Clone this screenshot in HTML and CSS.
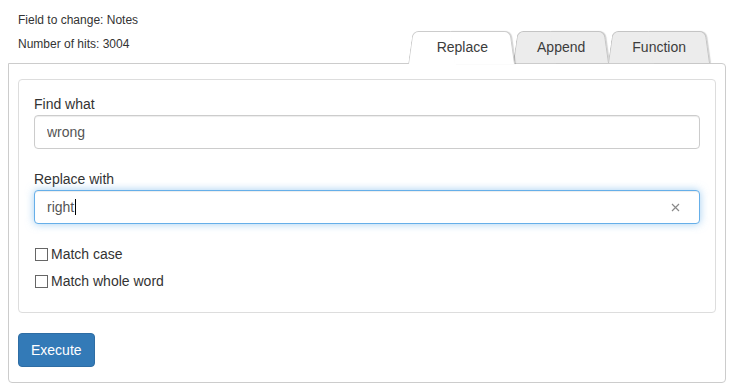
FILE: index.html
```html
<!DOCTYPE html>
<html>
<head>
<meta charset="utf-8">
<title>Find and replace</title>
<link rel="stylesheet" href="styles.css">
</head>
<body>
	<!-- Header: info + tabs -->
	<div class="header">
		<div class="info">
			<div>Field to change: Notes</div>
			<div>Number of hits: 3004</div>
		</div>
		<ul class="tabs">
			<li class="tab active">Replace</li>
			<li class="tab">Append</li>
			<li class="tab">Function</li>
		</ul>
	</div>
	<!-- Tab content -->
	<div class="panel">
		<div class="well">
			<div class="group">
				<label class="caption">Find what</label>
				<input class="field" type="text" value="wrong">
			</div>
			<div class="group">
				<label class="caption">Replace with</label>
				<div class="field focus">
					<span>right</span><span class="caret"></span>
					<svg class="clear" width="9" height="9" viewBox="0 0 9 9"><path d="M1 1L8 8M8 1L1 8" stroke="#8a8a8a" stroke-width="1.2" fill="none"/></svg>
				</div>
			</div>
			<label class="check"><input type="checkbox">Match case</label>
			<label class="check"><input type="checkbox">Match whole word</label>
		</div>
		<button class="btn">Execute</button>
	</div>
</body>
</html>
```
FILE: styles.css
```css
body {
	margin: 8px 7px 0 8px;
	font-family: "Liberation Sans", Arial, sans-serif;
	font-size: 14px;
	color: #333;
}
.header {
	display: flex;
	justify-content: space-between;
	height: 55px;
}
.info {
	padding-left: 10px;
	font-size: 12px;
	line-height: 24px;
}

/* tabs */
.tabs {
	list-style: none;
	margin: 0 16px -1px 0;
	padding: 0;
	display: flex;
	align-self: flex-end;
}
.tab {
	position: relative;
	z-index: 1;
	height: 33px;
	line-height: 33px;
	padding: 0 24px;
	margin-left: -1px;
	color: #3c3c3c;
}
.tab::before,
.tab::after {
	content: '';
	position: absolute;
	top: 0;
	bottom: 1px;
	width: 55%;
	z-index: -1;
	background: #ececec;
	border: 1px solid #c4c4c4;
	border-bottom: none;
}
.tab::before {
	left: 0;
	border-right: none;
	border-radius: 6px 0 0 0;
	transform-origin: bottom left;
	transform: skewX(-8deg);
}
.tab::after {
	right: 0;
	border-left: none;
	border-radius: 0 6px 0 0;
	transform-origin: bottom right;
	transform: skewX(8deg);
	box-shadow: 1px 0 1px rgba(0, 0, 0, 0.18);
}
.tab.active {
	z-index: 2;
	padding: 0 26px 0 29px;
}
.tab.active::before,
.tab.active::after {
	background: #fff;
	bottom: 0;
	border-color: #ccc;
}

/* content */
.panel {
	border: 1px solid #ccc;
	border-radius: 0 4px 4px 4px;
	padding: 15px 9px;
}
.well {
	border: 1px solid #ddd;
	border-radius: 4px;
	padding: 14px 15px 21px;
	margin-bottom: 20px;
}
.group { margin-bottom: 20px; }
.caption {
	display: block;
	line-height: 20px;
	margin-bottom: 1px;
}
.field {
	display: block;
	width: 100%;
	box-sizing: border-box;
	height: 34px;
	padding: 6px 12px;
	border: 1px solid #ccc;
	border-radius: 4px;
	box-shadow: inset 0 1px 1px rgba(0, 0, 0, 0.075);
	font-family: inherit;
	font-size: 14px;
	line-height: 20px;
	color: #555;
	background: #fff;
}
.focus {
	position: relative;
	display: flex;
	align-items: center;
	border-color: #66afe9;
	box-shadow: inset 0 1px 1px rgba(0, 0, 0, 0.075), 0 0 8px rgba(102, 175, 233, 0.6);
}
.caret {
	width: 1px;
	height: 16px;
	margin-left: 1px;
	background: #000;
}
.clear {
	position: absolute;
	right: 19px;
	top: 12px;
}
.check {
	display: flex;
	align-items: center;
	line-height: 20px;
	margin-bottom: 7px;
}
.check:last-child { margin-bottom: 0; }
.check input {
	appearance: none;
	width: 13px;
	height: 13px;
	margin: 0 3px 0 1px;
	border: 1px solid #666;
	background: #fff;
}
.btn {
	background: #337ab7;
	border: 1px solid #2e6da4;
	border-radius: 4px;
	color: #fff;
	padding: 6px 12px;
	font-family: inherit;
	font-size: 14px;
	line-height: 20px;
}
```
